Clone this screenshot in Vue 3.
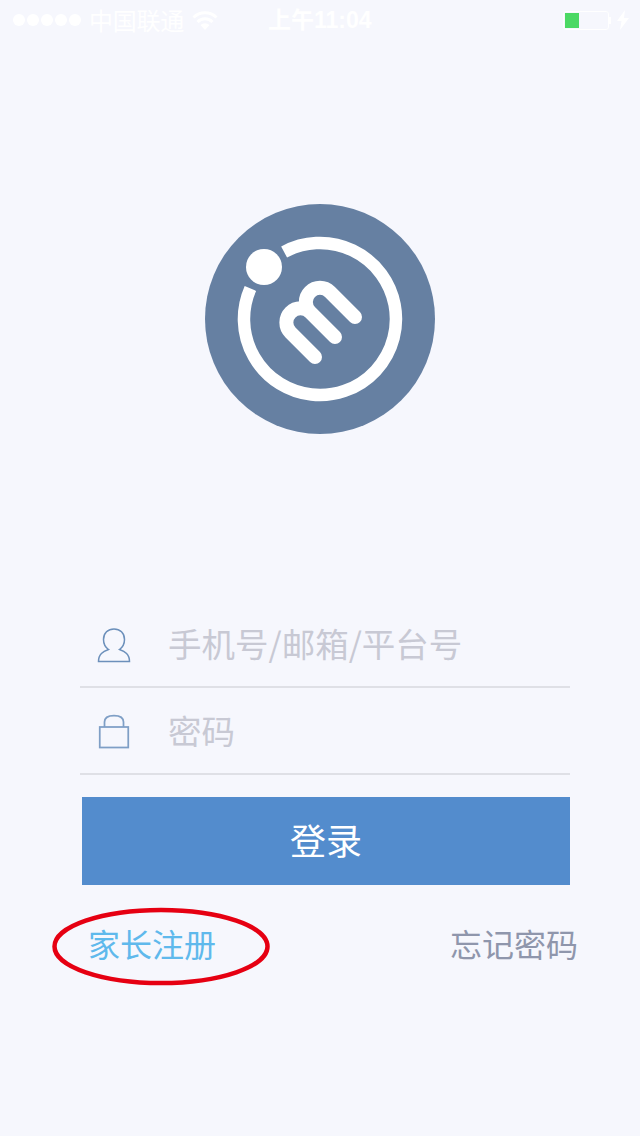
<template>
  <div class="login-page">
    <div class="status-bar">
      <div class="signal">
        <span v-for="n in 5" :key="n" class="dot"></span>
      </div>
      <span class="carrier">中国联通</span>
      <svg class="wifi" width="26" height="20" viewBox="0 0 26 20">
        <path d="M1.500 7.500a16.500 16.500 0 0 1 23 0" fill="none" stroke="#fff" stroke-width="3" />
        <path d="M5.500 12a10.500 10.500 0 0 1 15 0" fill="none" stroke="#fff" stroke-width="3" />
        <path d="M8.500 15a6.500 6.500 0 0 1 9 0L13 20z" fill="#fff" />
      </svg>
      <span class="time">上午11:04</span>
      <div class="battery">
        <div class="battery-body"><div class="battery-level"></div></div>
        <div class="battery-tip"></div>
      </div>
      <svg class="bolt" width="12" height="20" viewBox="0 0 12 20">
        <path d="M8 0L0 11h4.500L3 20l9-12H7z" fill="#fff" />
      </svg>
    </div>

    <div class="logo-area">
      <svg width="230" height="230" viewBox="205 204 230 230">
        <circle cx="320" cy="319" r="115" fill="#6680a2" />
        <path d="M284.100 252A76 76 0 1 1 250.400 288.400" fill="none" stroke="#fff" stroke-width="12.500" />
        <circle cx="264" cy="267" r="18" fill="#fff" />
        <path
          d="M315 357L290.500 332.500A14 14 0 0 1 310.500 312.500L335 337M310 312A14 14 0 0 1 330 292L355 317"
          fill="none"
          stroke="#fff"
          stroke-width="14"
          stroke-linecap="round"
        />
      </svg>
    </div>

    <form class="login-form" @submit.prevent>
      <div class="field">
        <svg class="field-icon" width="34" height="36" viewBox="0 0 34 36">
          <path
            d="M1.500 34.500C1.500 27 6 24.500 11.500 22.500C8 20 6.500 16.500 6.500 12.500C6.500 6 11 2 17 2S27.500 6 27.500 12.500C27.500 16.500 26 20 22.500 22.500C28 24.500 32.500 27 32.500 34.500Z"
            fill="none"
            stroke="#6c90bb"
            stroke-width="1.500"
          />
        </svg>
        <span class="placeholder">手机号/邮箱/平台号</span>
      </div>
      <div class="field">
        <svg class="field-icon" width="34" height="36" viewBox="0 0 34 36">
          <rect x="2.750" y="13" width="28.500" height="20.500" fill="none" stroke="#7f9fc6" stroke-width="1.750" />
          <path d="M7.500 13V8C7.500 3.500 11 1.500 17 1.500S26.500 3.500 26.500 8V13" fill="none" stroke="#7f9fc6" stroke-width="1.750" />
        </svg>
        <span class="placeholder">密码</span>
      </div>
      <button class="login-btn" type="button">登录</button>
    </form>

    <div class="links">
      <a class="register">
        家长注册
        <svg class="circle-mark" width="220" height="80" viewBox="0 0 220 80">
          <ellipse cx="109" cy="39.500" rx="106.500" ry="36.500" fill="none" stroke="#e60012" stroke-width="4.500" />
        </svg>
      </a>
      <a class="forgot">忘记密码</a>
    </div>
  </div>
</template>

<script setup>
</script>

<style>
html,
body {
  margin: 0;
  background: #f6f7fd;
}
</style>

<style scoped>
.login-page {
  width: 640px;
  height: 1136px;
  background: #f6f7fd;
  font-family: "Noto Sans CJK SC", "Liberation Sans", sans-serif;
  overflow: hidden;
}

.status-bar {
  display: flex;
  align-items: center;
  height: 40px;
  padding-left: 13px;
  color: #fff;
  font-size: 24px;
  line-height: 38px;
}

.signal {
  display: flex;
  gap: 2px;
}

.dot {
  width: 12px;
  height: 12px;
  border-radius: 50%;
  background: #fff;
}

.carrier {
  margin-left: 8px;
  letter-spacing: -0.250px;
}

.wifi {
  margin-left: 8px;
}

.time {
  margin-left: 50px;
  width: 295px;
  font-size: 23px;
  font-family: "Liberation Sans", "Noto Sans CJK SC", sans-serif;
  font-weight: 700;
}

.battery {
  display: flex;
  align-items: center;
}

.battery-body {
  width: 42px;
  height: 15px;
  border: 1.500px solid #fff;
  border-radius: 3px;
  padding: 1px;
  box-sizing: content-box;
}

.battery-level {
  width: 14px;
  height: 100%;
  background: #4cd964;
}

.battery-tip {
  width: 2px;
  height: 7px;
  background: #fff;
}

.bolt {
  margin-left: 6px;
}

.logo-area {
  display: flex;
  justify-content: center;
  padding-top: 164px;
  height: 237px;
}

.login-form {
  margin: 160px 70px 0 80px;
}

.field {
  display: flex;
  align-items: center;
  height: 85px;
  border-bottom: 2px solid #dfe0e6;
}

.field-icon {
  margin: 3px 0 0 17px;
  width: 34px;
  flex-shrink: 0;
}

.placeholder {
  margin-left: 37px;
  padding-bottom: 2px;
  font-size: 33.500px;
  color: #c8c9d4;
}

.login-btn {
  display: block;
  width: 488px;
  height: 88px;
  margin: 22px 0 0 2px;
  padding: 0 0 4px;
  border: none;
  background: #538ccd;
  color: #fff;
  font-family: inherit;
  font-size: 36px;
}

.links {
  display: flex;
  justify-content: space-between;
  margin: 35px 62px 0 88px;
  font-size: 32px;
  line-height: 46px;
}

.register {
  position: relative;
  color: #5fb9ec;
}

.circle-mark {
  position: absolute;
  left: -36px;
  top: -13px;
}

.forgot {
  color: #8f96ac;
}
</style>
